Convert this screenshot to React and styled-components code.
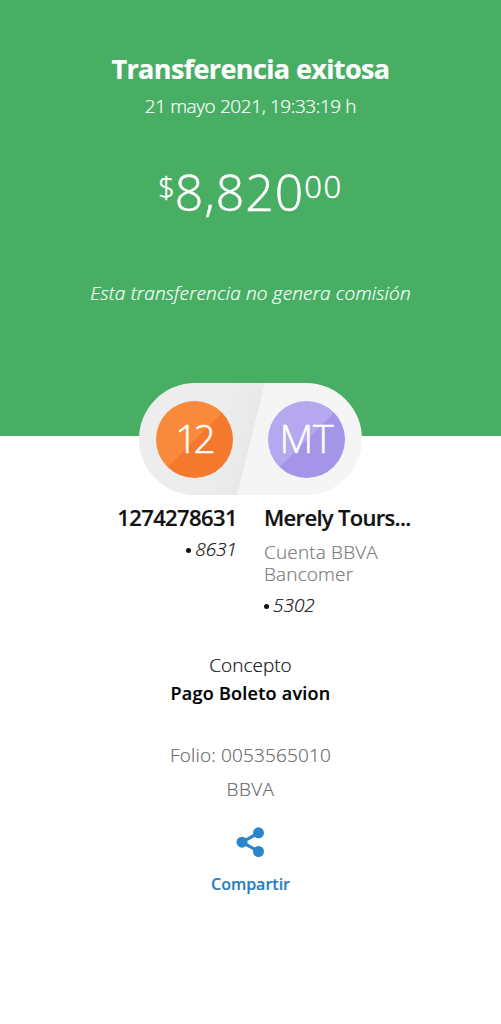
import React from 'react';
import styled, { createGlobalStyle } from 'styled-components';

export default function App() {
    return (
        <Page>
            <GlobalStyle />
            <Header>
                <Title>Transferencia exitosa</Title>
                <DateText>21 mayo 2021, 19:33:19 h</DateText>
                <Amount>
                    <Currency>$</Currency>
                    <Units>8,820</Units>
                    <Cents>00</Cents>
                </Amount>
                <Fee>Esta transferencia no genera comisión</Fee>
            </Header>
            <Pill>
                <Avatar $light="#f78b3b" $dark="#f5792d">
                    <Initials $spacing="-4px" $shift="-1px">12</Initials>
                </Avatar>
                <Avatar $light="#b5a8ee" $dark="#a595e8">
                    <Initials $spacing="0px" $shift="0px">MT</Initials>
                </Avatar>
            </Pill>
            <Accounts>
                <Account $align="flex-end">
                    <Name $spacing="-0.6px">1274278631</Name>
                    <Digits $top="7px"><Dot />8631</Digits>
                </Account>
                <Account $align="flex-start">
                    <Name $spacing="-0.68px">Merely Tours...</Name>
                    <Bank>Cuenta BBVA</Bank>
                    <Bank>Bancomer</Bank>
                    <Digits $top="9px"><Dot />5302</Digits>
                </Account>
            </Accounts>
            <Label>Concepto</Label>
            <Concept>Pago Boleto avion</Concept>
            <Folio>Folio: 0053565010</Folio>
            <BankName>BBVA</BankName>
            <Share>
                <ShareIcon width="28" height="32" viewBox="0 0 28 32">
                    <path d="M22.5 7 L6 16.2 L22.5 25.4" fill="none" stroke="#2a86ca" strokeWidth="3.2" />
                    <circle cx="22.5" cy="6.8" r="5.5" />
                    <circle cx="6" cy="16.2" r="5.5" />
                    <circle cx="22.5" cy="25.5" r="5.5" />
                </ShareIcon>
                Compartir
            </Share>
        </Page>
    );
}

const GlobalStyle = createGlobalStyle`
  body {
    margin: 0;
    background: white;
  }
`;

const Page = styled.div`
  display: flex;
  flex-direction: column;
  align-items: center;
  width: 501px;
  height: 1024px;
  background: white;
  color: #121212;
  font-family: "Open Sans", "Noto Sans", sans-serif;
  font-weight: 300;
  font-size: 19px;
  line-height: 24px;
  white-space: nowrap;
  -webkit-text-stroke: 0.2px; /* the light cut is a bit too thin on its own */
`;

const Header = styled.div`
  box-sizing: border-box;
  display: flex;
  flex-direction: column;
  align-items: center;
  flex-shrink: 0;
  width: 100%;
  height: 436px;
  padding-top: 51px;
  background: #48ae64;
  color: white;
`;

const Title = styled.div`
  font-weight: 700;
  font-size: 27px;
  line-height: 36px;
  letter-spacing: -0.62px;
`;

const DateText = styled.div`
  margin-top: 7px;
  letter-spacing: -0.4px;
`;

const Amount = styled.div`
  display: flex;
  align-items: flex-start;
  margin-top: 44px;
  line-height: 40px;
  -webkit-text-stroke: 0.5px;
`;

const Currency = styled.span`
  margin-top: 5px;
  font-size: 29px;
`;

const Units = styled.span`
  font-size: 50px;
  line-height: 60px;
  letter-spacing: 0.9px;
`;

const Cents = styled.span`
  margin-top: 4px;
  font-size: 31px;
  letter-spacing: 1.6px;
`;

const Fee = styled.div`
  margin-top: 59px;
  font-style: italic;
  letter-spacing: 0.16px;
`;

const Pill = styled.div`
  box-sizing: border-box;
  display: flex;
  align-items: center;
  justify-content: space-between;
  flex-shrink: 0;
  width: 223px;
  height: 112px;
  margin-top: -53px;
  padding: 0 17px;
  border-radius: 56px;
  background: linear-gradient(104deg, #ededed 35%, #e9e9e9 50%, #f5f5f5 50.4%);
`;

const Avatar = styled.div`
  display: flex;
  align-items: center;
  justify-content: center;
  width: 77px;
  height: 77px;
  border-radius: 50%;
  background: linear-gradient(135deg, ${(props) => props.$light} 50%, ${(props) => props.$dark} 50.8%);
`;

const Initials = styled.span`
  color: white;
  font-size: 39px;
  line-height: 77px;
  letter-spacing: ${(props) => props.$spacing};
  transform: translate(${(props) => props.$shift}, -2px);
  -webkit-text-stroke: 0.5px;
`;

const Accounts = styled.div`
  display: grid;
  grid-template-columns: 237px 237px;
  column-gap: 27px;
  width: 100%;
  margin-top: 8px;
`;

const Account = styled.div`
  display: flex;
  flex-direction: column;
  align-items: ${(props) => props.$align};
`;

const Name = styled.div`
  font-weight: 600;
  font-size: 22px;
  line-height: 28px;
  letter-spacing: ${(props) => props.$spacing};
`;

const Digits = styled.div`
  display: flex;
  align-items: center;
  gap: 4px;
  margin-top: ${(props) => props.$top};
  font-style: italic;
  line-height: 22px;
`;

const Dot = styled.span`
  width: 5px;
  height: 5px;
  margin-top: 2px;
  border-radius: 50%;
  background: #121212;
`;

const Bank = styled.div`
  color: #7a7a7a;
  line-height: 22px;
  letter-spacing: 0.15px;

  ${Name} + & {
    margin-top: 10px;
  }
`;

const Label = styled.div`
  margin-top: 37px;
`;

const Concept = styled.div`
  margin-top: 4px;
  font-weight: 600;
  font-size: 18px;
  letter-spacing: 0.25px;
  color: #000;
`;

const Folio = styled.div`
  margin-top: 38px;
  color: #6a6a6a;
  letter-spacing: 0.15px;
`;

const BankName = styled.div`
  margin-top: 10px;
  color: #6a6a6a;
  letter-spacing: 0.4px;
`;

const Share = styled.div`
  display: flex;
  flex-direction: column;
  align-items: center;
  margin-top: 25px;
  color: #2a7fc0;
  font-weight: 600;
  font-size: 16px;
  line-height: 20px;
`;

const ShareIcon = styled.svg`
  margin-bottom: 16px;
  fill: #2a86ca;
`;
